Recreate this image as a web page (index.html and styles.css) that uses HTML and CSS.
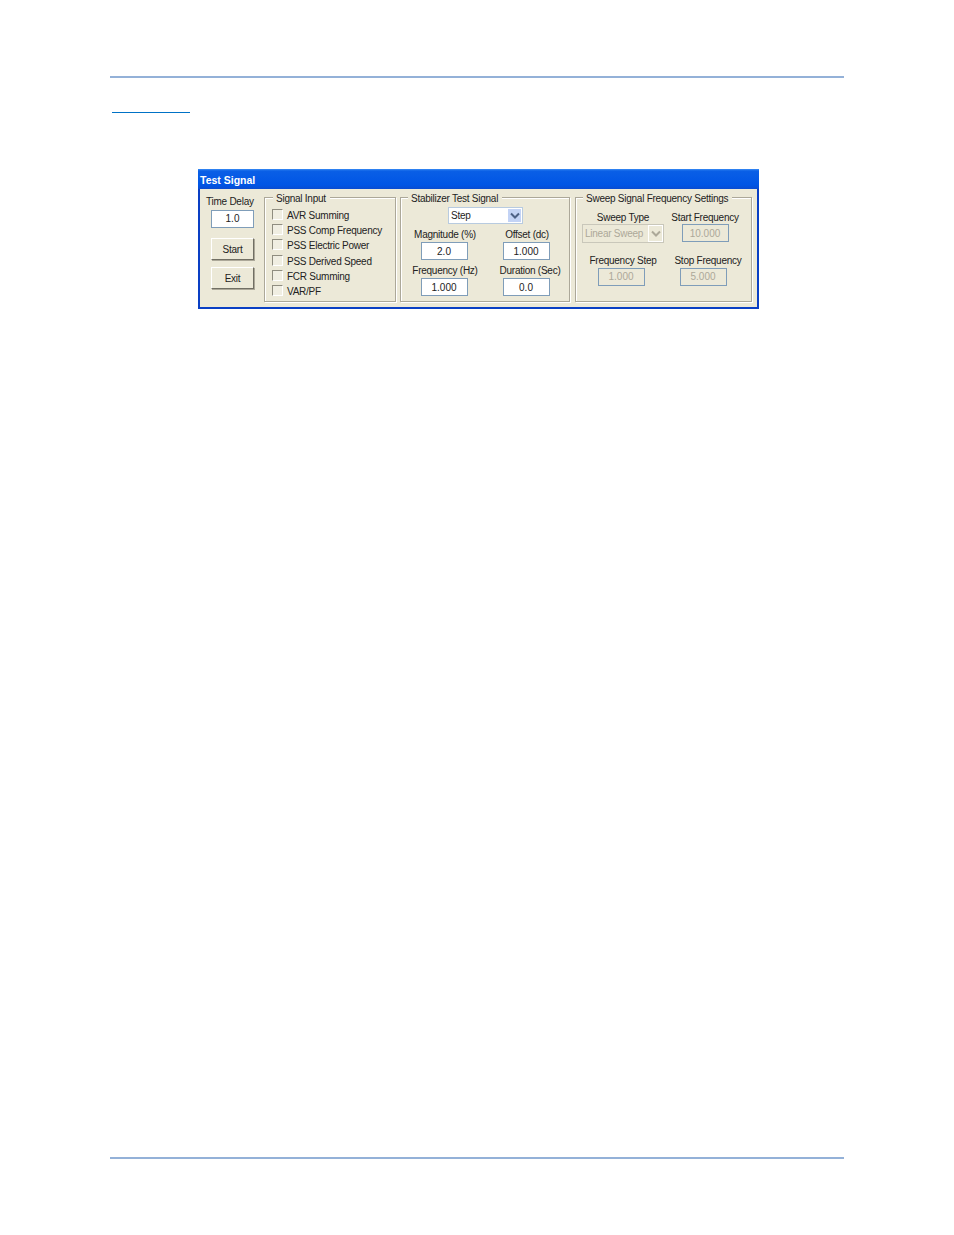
FILE: index.html
```html
<!DOCTYPE html>
<html lang="en">
<head>
    <meta charset="UTF-8">
    <title>Test Signal</title>
    <link rel="stylesheet" href="styles.css">
</head>
<body>

<header class="page-rule page-rule-top"></header>

<a class="section-link" href="#"></a>

<main class="window">
    <div class="title-bar">Test Signal</div>

    <div class="window-body">
        <!-- Left column -->
        <div class="side-column">
            <label class="field-label">Time Delay</label>
            <input class="text-box" type="text" value="1.0">
            <button class="push-button push-button-first">Start</button>
            <button class="push-button">Exit</button>
        </div>

        <div class="group group-signal">
            <span class="group-title">Signal Input</span>
            <label class="check-row"><input type="checkbox"> AVR Summing</label>
            <label class="check-row"><input type="checkbox"> PSS Comp Frequency</label>
            <label class="check-row"><input type="checkbox"> PSS Electric Power</label>
            <label class="check-row"><input type="checkbox"> PSS Derived Speed</label>
            <label class="check-row"><input type="checkbox"> FCR Summing</label>
            <label class="check-row"><input type="checkbox"> VAR/PF</label>
        </div>

        <div class="group group-stabilizer">
            <span class="group-title">Stabilizer Test Signal</span>
            <div class="combo combo-step">
                <span class="combo-value">Step</span>
                <span class="combo-arrow">
                    <svg width="10" height="8" viewBox="0 0 10 8"><path d="M1 1.5 5 5.5 9 1.5" fill="none" stroke="#4d6185" stroke-width="2"/></svg>
                </span>
            </div>
            <div class="field-grid">
                <div class="field">
                    <label class="field-label">Magnitude (%)</label>
                    <input class="text-box" type="text" value="2.0">
                </div>
                <div class="field">
                    <label class="field-label">Offset (dc)</label>
                    <input class="text-box" type="text" value="1.000">
                </div>
                <div class="field">
                    <label class="field-label">Frequency (Hz)</label>
                    <input class="text-box" type="text" value="1.000">
                </div>
                <div class="field">
                    <label class="field-label label-shift">Duration (Sec)</label>
                    <input class="text-box" type="text" value="0.0">
                </div>
            </div>
        </div>

        <div class="group group-sweep">
            <span class="group-title">Sweep Signal Frequency Settings</span>
            <div class="sweep-grid">
                <div class="field">
                    <label class="field-label">Sweep Type</label>
                    <div class="combo combo-disabled">
                        <span class="combo-value">Linear Sweep</span>
                        <span class="combo-arrow">
                            <svg width="10" height="8" viewBox="0 0 10 8"><path d="M1 1.5 5 5.5 9 1.5" fill="none" stroke="#aca899" stroke-width="2"/></svg>
                        </span>
                    </div>
                </div>
                <div class="field">
                    <label class="field-label">Start Frequency</label>
                    <input class="text-box" type="text" value="10.000" disabled>
                </div>
                <div class="field field-lower">
                    <label class="field-label">Frequency Step</label>
                    <input class="text-box box-shift" type="text" value="1.000" disabled>
                </div>
                <div class="field field-lower">
                    <label class="field-label label-shift">Stop Frequency</label>
                    <input class="text-box box-shift" type="text" value="5.000" disabled>
                </div>
            </div>
        </div>
    </div>
</main>

<footer class="page-rule page-rule-bottom"></footer>

</body>
</html>
```

FILE: styles.css
```css
html, body {
    margin: 0;
    height: 100%;
}
body {
    display: flex;
    flex-direction: column;
    background-color: #fff;
    font-family: "Liberation Sans", Arial, sans-serif;
    font-size: 10px;
    letter-spacing: -0.25px;
    color: #222;
    overflow: hidden;
}
.page-rule {
    height: 2px;
    margin: 0 110px;
    background-color: #94b1d8;
}
.page-rule-top {
    margin-top: 76px;
}
.page-rule-bottom {
    margin-top: auto;
    margin-bottom: 76px;
}
.section-link {
    display: block;
    width: 78px;
    height: 1px;
    margin: 34px 0 0 112px;
    background-color: #0072c6;
}

/* Dialog window */
.window {
    box-sizing: border-box;
    width: 561px;
    height: 140px;
    margin: 56px 0 0 198px;
    border: 2px solid #0a3fc4;
    border-top: none;
    background-color: #ece9d8;
    display: flex;
    flex-direction: column;
}
.title-bar {
    height: 20px;
    margin: 0 -2px;
    padding-left: 2px;
    background: linear-gradient(to bottom, #3a8cf5 0, #0a5fe6 2px, #0055e5 16px, #0a4bd0 100%);
    color: #fff;
    font-size: 10.5px;
    font-weight: bold;
    letter-spacing: 0;
    line-height: 23px;
}
.window-body {
    display: flex;
    padding-top: 8px;
}

.side-column {
    box-sizing: border-box;
    width: 64px;
    padding-left: 11px;
    display: flex;
    flex-direction: column;
    align-items: flex-start;
}
.side-column .field-label {
    margin: -2px 0 3px -5px;
}
.side-column .text-box {
    width: 43px;
    padding-bottom: 1px;
}

.push-button {
    box-sizing: border-box;
    width: 43px;
    height: 22px;
    margin: 7px 0 0 0;
    padding: 0;
    border: 1px solid;
    border-color: #fff #716f64 #716f64 #fff;
    box-shadow: 1px 1px 0 #aca899;
    background-color: #ece9d8;
    font: inherit;
    letter-spacing: inherit;
    color: #222;
}
.push-button-first {
    margin-top: 10px;
}

/* Etched group boxes */
.group {
    box-sizing: border-box;
    height: 105px;
    border: 1px solid #aca899;
    box-shadow: inset 1px 1px 0 #fff, 1px 1px 0 #fff;
}
.group-signal {
    width: 132px;
    padding: 7px 0 0 7px;
}
.group-stabilizer {
    width: 170px;
    margin-left: 4px;
}
.group-sweep {
    width: 177px;
    margin-left: 5px;
}
.group-title {
    display: block;
    width: fit-content;
    height: 12px;
    margin: -6px 0 0 7px;
    padding: 0 4px 0 3px;
    line-height: 14px;
    background-color: #ece9d8;
}
.group-signal .group-title {
    margin: -13px 0 3px 1px;
}

.check-row {
    box-sizing: border-box;
    display: flex;
    align-items: center;
    gap: 4px;
    height: 15.2px;
    padding-top: 2px;
}
.check-row input {
    appearance: none;
    box-sizing: border-box;
    width: 11px;
    height: 11px;
    margin: 0 0 2px;
    border: 1px solid #8f8d80;
    border-right-color: #fff;
    border-bottom-color: #fff;
    background-color: #f0eee2;
}

.text-box {
    box-sizing: border-box;
    width: 47px;
    height: 18px;
    padding: 0;
    border: 1px solid #7f9db9;
    background-color: #fff;
    font: inherit;
    color: #222;
    text-align: center;
}
.text-box:disabled {
    background-color: #ece9d8;
    color: #aca899;
}
.box-shift {
    margin-right: 4px;
}

.combo {
    box-sizing: border-box;
    display: flex;
    align-items: center;
    justify-content: space-between;
    height: 18px;
    border: 1px solid #c9c7ba;
    background-color: #fff;
}
.combo-step {
    width: 75px;
    height: 17px;
    margin: 3px 0 0 47px;
    padding-left: 2px;
    border-color: #b8cbe0;
}
.combo-disabled {
    width: 82px;
    height: 19px;
    padding-left: 2px;
    background-color: #ece9d8;
    color: #aca899;
}
.combo-arrow {
    display: flex;
    align-items: center;
    justify-content: center;
    width: 15px;
    height: 15px;
    background-color: #c3d3f5;
    border: 1px solid #fff;
    box-sizing: border-box;
}
.combo-disabled .combo-arrow {
    height: 17px;
    background-color: #ece9d8;
}

.field {
    display: flex;
    flex-direction: column;
    align-items: center;
}
.field-label {
    height: 12px;
    line-height: 14px;
    white-space: nowrap;
}
.label-shift {
    margin-left: 6px;
}
.field-grid {
    display: grid;
    grid-template-columns: 82px 82px;
    row-gap: 4px;
    margin: 4px 0 0 2px;
}
.field-grid .field-label {
    margin: 0 0 2px 2px;
}
.field-grid .label-shift {
    margin-left: 8px;
}
.sweep-grid {
    display: grid;
    grid-template-columns: 82px 82px;
    row-gap: 12px;
    margin: 7px 0 0 6px;
}
.sweep-grid .field-label {
    margin-bottom: 1px;
}
/* lower sweep row sits a pixel tighter than the upper one */
.field-lower .field-label {
    line-height: 12px;
}
.field-lower .text-box {
    padding-bottom: 1px;
}
```
